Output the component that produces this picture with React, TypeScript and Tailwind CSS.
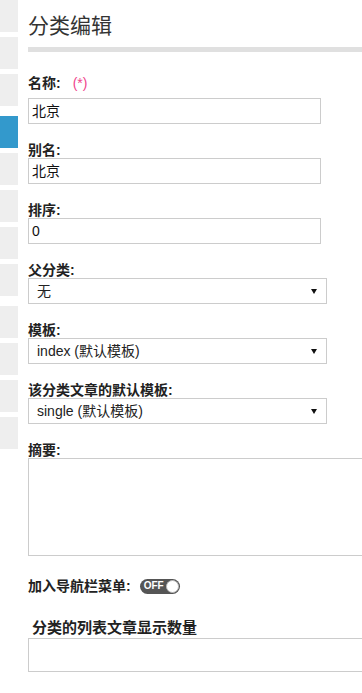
import React from "react";

const font = { fontFamily: '"Liberation Sans", "Noto Sans CJK SC", sans-serif' };

function Label({ children, first }: { children: React.ReactNode; first?: boolean }) {
  return (
    <div className={`h-[16px] leading-[16px] text-[14px] font-bold text-[#222] ${first ? "mt-[23px] mb-[7px]" : "mt-[18px]"}`}>
      {children}
    </div>
  );
}

function TextBox({ value, w = "w-[293px]" }: { value: string; w?: string }) {
  return (
    <div className={`${w} h-[26px] border border-[#cccccc] bg-white flex items-center px-[3px] text-[14px] text-[#111]`}>
      {value}
    </div>
  );
}

function SelectBox({ value }: { value: string }) {
  return (
    <div className="w-[299px] h-[26px] border border-[#cccccc] bg-white flex items-center justify-between pl-[8px] pr-[9px] text-[14px] text-[#222]">
      <span>{value}</span>
      <svg width="6" height="5" viewBox="0 0 6 5">
        <path d="M0 0H6L3 5Z" fill="#111" />
      </svg>
    </div>
  );
}

export default function App() {
  const blocks = [
    { mt: 0, blue: false },
    { mt: 5, blue: false },
    { mt: 5, blue: false },
    { mt: 10, blue: true },
    { mt: 5, blue: false },
    { mt: 5, blue: false },
    { mt: 5, blue: false },
    { mt: 5, blue: false },
    { mt: 10, blue: false },
    { mt: 5, blue: false },
    { mt: 5, blue: false },
    { mt: 5, blue: false },
  ];
  return (
    <div className="w-[362px] h-[693px] bg-white flex overflow-hidden" style={font}>
      <div className="w-[18px] flex flex-col shrink-0">
        {blocks.map((b, i) => (
          <div
            key={i}
            className={`h-[32px] ${b.blue ? "bg-[#3399cc]" : "bg-[#eeeeee]"} ${b.mt === 10 ? "mt-[10px]" : b.mt === 5 ? "mt-[5px]" : ""}`}
          />
        ))}
      </div>
      <div className="ml-[10px] flex-1 flex flex-col min-w-0">
        <div className="pt-[11px] h-[41px] leading-[30px] text-[21px] text-[#333]">分类编辑</div>
        <div className="mt-[6px] h-[5px] bg-[#e0e0e0] w-full" />

        <Label first>
          名称:<span className="ml-[12px] font-normal text-[14px] text-[#f0448c]">(*)</span>
        </Label>
        <TextBox value="北京" />

        <Label>别名:</Label>
        <TextBox value="北京" />

        <Label>排序:</Label>
        <TextBox value="0" />

        <Label>父分类:</Label>
        <SelectBox value="无" />

        <Label>模板:</Label>
        <SelectBox value="index (默认模板)" />

        <Label>该分类文章的默认模板:</Label>
        <SelectBox value="single (默认模板)" />

        <Label>摘要:</Label>
        <div className="w-[360px] shrink-0 h-[98px] border border-[#cccccc] bg-white" />

        <div className="mt-[22px] flex items-center h-[16px]">
          <span className="text-[14px] font-bold text-[#222] leading-[16px]">加入导航栏菜单:</span>
          <div className="ml-[9px] w-[40px] h-[15px] rounded-full bg-[#555555] flex items-center justify-between pl-[4px] pr-[1px]">
            <span className="text-[10px] font-bold text-white leading-none">OFF</span>
            <span className="w-[13px] h-[13px] rounded-full bg-white border border-[#bbbbbb]" />
          </div>
        </div>

        <div className="mt-[24px] pl-[4px] h-[20px] leading-[20px] text-[15px] font-bold text-[#222]">分类的列表文章显示数量</div>
        <div className="w-[360px] shrink-0 h-[34px] border border-[#cccccc] bg-white" />
      </div>
    </div>
  );
}
